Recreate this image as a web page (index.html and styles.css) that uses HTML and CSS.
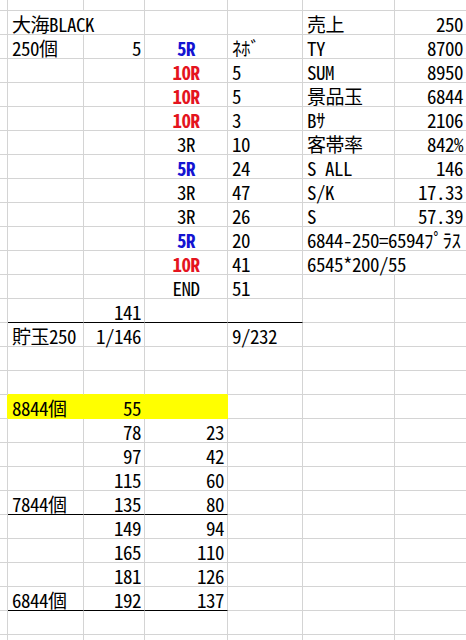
FILE: index.html
```html
<!DOCTYPE html>
<html lang="ja">
<head>
<meta charset="utf-8">
<link rel="stylesheet" href="styles.css">
</head>
<body>
<div class="sheet">
  <div class="row top"><div class="c0"></div><div></div><div></div><div></div><div></div><div></div><div></div></div>

  <div class="row"><div class="c0"></div><div class="l span2">大海BLACK</div><div></div><div></div><div class="l">売上</div><div class="r">250</div></div>
  <div class="row"><div class="c0"></div><div class="l">250個</div><div class="r">5</div><div class="c blue">5R</div><div class="l">ﾈﾎﾞ</div><div class="l">TY</div><div class="r">8700</div></div>
  <div class="row"><div class="c0"></div><div></div><div></div><div class="c red">10R</div><div class="l">5</div><div class="l">SUM</div><div class="r">8950</div></div>
  <div class="row"><div class="c0"></div><div></div><div></div><div class="c red">10R</div><div class="l">5</div><div class="l">景品玉</div><div class="r">6844</div></div>
  <div class="row"><div class="c0"></div><div></div><div></div><div class="c red">10R</div><div class="l">3</div><div class="l">Bｻ</div><div class="r">2106</div></div>
  <div class="row"><div class="c0"></div><div></div><div></div><div class="c">3R</div><div class="l">10</div><div class="l">客帯率</div><div class="r">842%</div></div>
  <div class="row"><div class="c0"></div><div></div><div></div><div class="c blue">5R</div><div class="l">24</div><div class="l">S ALL</div><div class="r">146</div></div>
  <div class="row"><div class="c0"></div><div></div><div></div><div class="c">3R</div><div class="l">47</div><div class="l">S/K</div><div class="r">17.33</div></div>
  <div class="row"><div class="c0"></div><div></div><div></div><div class="c">3R</div><div class="l">26</div><div class="l">S</div><div class="r">57.39</div></div>
  <div class="row"><div class="c0"></div><div></div><div></div><div class="c blue">5R</div><div class="l">20</div><div class="l span2">6844-250=6594ﾌﾟﾗｽ</div></div>
  <div class="row"><div class="c0"></div><div></div><div></div><div class="c red">10R</div><div class="l">41</div><div class="l span2">6545*200/55</div></div>
  <div class="row"><div class="c0"></div><div></div><div></div><div class="c">END</div><div class="l">51</div><div></div><div></div></div>
  <div class="row"><div class="c0"></div><div class="ul"></div><div class="r ul">141</div><div class="ul"></div><div class="ul"></div><div></div><div></div></div>
  <div class="row"><div class="c0"></div><div class="l">貯玉250</div><div class="r">1/146</div><div></div><div class="l">9/232</div><div></div><div></div></div>
  <div class="row"><div class="c0"></div><div></div><div></div><div></div><div></div><div></div><div></div></div>
  <div class="row"><div class="c0"></div><div class="yb"></div><div class="yb"></div><div class="yb"></div><div></div><div></div><div></div></div>
  <div class="row"><div class="c0 yr"></div><div class="l hl">8844個</div><div class="r hl">55</div><div class="hl"></div><div></div><div></div><div></div></div>
  <div class="row"><div class="c0"></div><div></div><div class="r">78</div><div class="r">23</div><div></div><div></div><div></div></div>
  <div class="row"><div class="c0"></div><div></div><div class="r">97</div><div class="r">42</div><div></div><div></div><div></div></div>
  <div class="row"><div class="c0"></div><div></div><div class="r">115</div><div class="r">60</div><div></div><div></div><div></div></div>
  <div class="row"><div class="c0"></div><div class="l ul">7844個</div><div class="r ul">135</div><div class="r ul">80</div><div></div><div></div><div></div></div>
  <div class="row"><div class="c0"></div><div></div><div class="r">149</div><div class="r">94</div><div></div><div></div><div></div></div>
  <div class="row"><div class="c0"></div><div></div><div class="r">165</div><div class="r">110</div><div></div><div></div><div></div></div>
  <div class="row"><div class="c0"></div><div></div><div class="r">181</div><div class="r">126</div><div></div><div></div><div></div></div>
  <div class="row"><div class="c0"></div><div class="l ul">6844個</div><div class="r ul">192</div><div class="r ul">137</div><div></div><div></div><div></div></div>
  <div class="row"><div class="c0"></div><div></div><div></div><div></div><div></div><div></div><div></div></div>
  <div class="row"><div class="c0"></div><div></div><div></div><div></div><div></div><div></div><div></div></div>
</div>
</body>
</html>
```

FILE: styles.css
```css
html, body {
  margin: 0;
  padding: 0;
  background: #ffffff;
  overflow: hidden;
}

.sheet {
  width: 467px;
  font-family: "Noto Sans Mono CJK JP", "Noto Sans CJK JP", monospace;
  font-size: 19px;
  letter-spacing: -0.5px;
  color: #000000;
}

.row {
  display: grid;
  grid-template-columns: 8px 76px 61px 83px 75px 92px 72px;
  height: 24px;
}

.row.top {
  height: 11px;
}

.row > div {
  box-sizing: border-box;
  border-right: 1px solid #d4d4d4;
  border-bottom: 1px solid #d4d4d4;
  line-height: 20px;
  padding-top: 3px;
  white-space: nowrap;
  overflow: visible;
}

.l {
  text-align: left;
  padding-left: 4px;
}

.r {
  text-align: right;
  padding-right: 3px;
}

.c {
  text-align: center;
}

.span2 {
  grid-column: span 2;
}

.blue {
  color: #1414d2;
  font-weight: bold;
}

.red {
  color: #e4141e;
  font-weight: bold;
}

.row > .ul {
  border-bottom-color: #000000;
}

.row > .hl {
  background: #ffff00;
  border-right-color: #ffff00;
  border-bottom-color: #ffff00;
}

.row > .yb {
  border-bottom-color: #ffff00;
}

.row > .yr {
  border-right-color: #ffff00;
}
```
